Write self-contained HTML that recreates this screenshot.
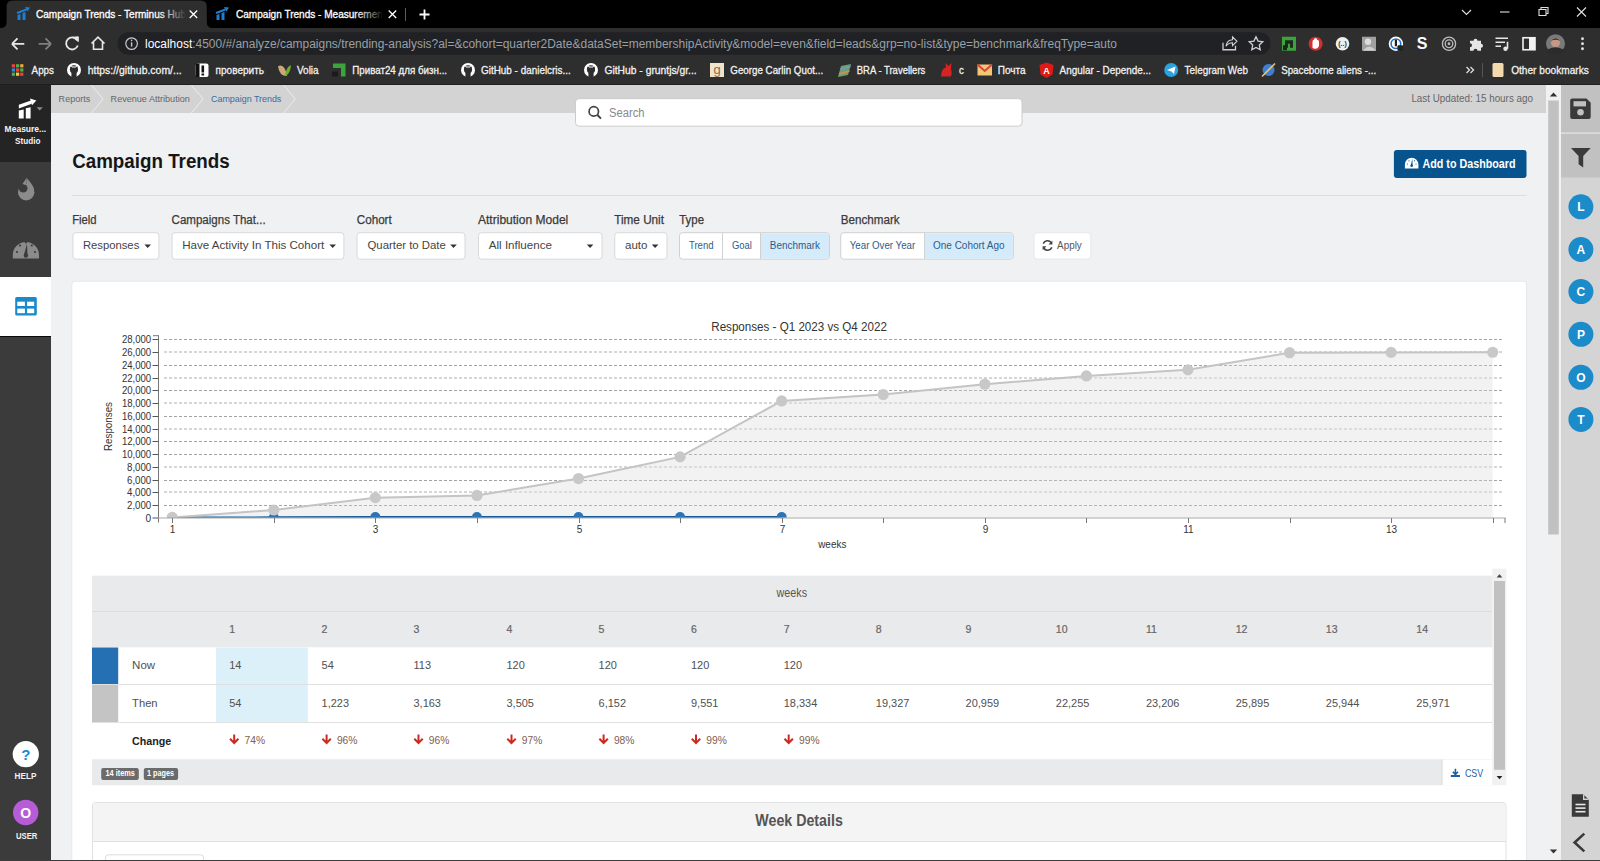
<!DOCTYPE html>
<html><head><meta charset="utf-8"><title>Campaign Trends</title>
<style>
html,body{margin:0;padding:0;width:1600px;height:861px;overflow:hidden;background:#f0f1f3}
svg{display:block}
text{font-family:"Liberation Sans",sans-serif}
</style></head><body>
<svg width="1600" height="861" viewBox="0 0 1600 861" style="position:absolute;left:0;top:0">
<rect x="0" y="0" width="1600" height="28" fill="#000000"/>
<rect x="0" y="28" width="1600" height="57" fill="#2e2e2e"/>
<path d="M0.5 28 Q6.6 28 6.6 22 L6.6 6.5 Q6.6 0.5 12.6 0.5 L200.8 0.5 Q206.8 0.5 206.8 6.5 L206.8 22 Q206.8 28 213 28 Z" fill="#2e2e2e"/>
<path d="M17.5 15 L20.5 14 L20.5 20 L17.5 20Z" fill="#1f7ed0"/>
<path d="M22.5 13 L25.5 12 L25.5 20 L22.5 20Z" fill="#1f7ed0"/>
<path d="M17.0 13 L26.5 9.5" fill="none" stroke="#1f7ed0" stroke-width="2"/>
<path d="M25.0 7 L30.0 7.5 L27.5 11.5Z" fill="#1f7ed0"/>
<path d="M216.5 15 L219.5 14 L219.5 20 L216.5 20Z" fill="#1f7ed0"/>
<path d="M221.5 13 L224.5 12 L224.5 20 L221.5 20Z" fill="#1f7ed0"/>
<path d="M216.0 13 L225.5 9.5" fill="none" stroke="#1f7ed0" stroke-width="2"/>
<path d="M224.0 7 L229.0 7.5 L226.5 11.5Z" fill="#1f7ed0"/>
<defs><linearGradient id="fadeA" gradientUnits="userSpaceOnUse" x1="0" y1="0" x2="150" y2="0"><stop offset="0.8" stop-color="#fff"/><stop offset="1" stop-color="#fff" stop-opacity="0"/></linearGradient><linearGradient id="fadeB" gradientUnits="userSpaceOnUse" x1="0" y1="0" x2="147" y2="0"><stop offset="0.8" stop-color="#fff"/><stop offset="1" stop-color="#fff" stop-opacity="0"/></linearGradient></defs>
<svg x="36" y="0" width="150" height="28" overflow="hidden">
<text x="0" y="17.7" font-size="11" fill="url(#fadeA)" textLength="150" lengthAdjust="spacingAndGlyphs" stroke="url(#fadeA)" stroke-width="0.3">Campaign Trends - Terminus Hub</text>
</svg>
<svg x="236" y="0" width="147" height="28" overflow="hidden">
<text x="0" y="17.7" font-size="11" fill="url(#fadeB)" textLength="180.9" lengthAdjust="spacingAndGlyphs" stroke="url(#fadeB)" stroke-width="0.3">Campaign Trends - Measurement Studio</text>
</svg>
<path d="M189.7 10.5 L197.2 18 M197.2 10.5 L189.7 18" fill="none" stroke="#fff" stroke-width="1.3"/>
<path d="M388.7 10.5 L396.2 18 M396.2 10.5 L388.7 18" fill="none" stroke="#fff" stroke-width="1.3"/>
<path d="M405.5 8 V21" fill="none" stroke="#6b5a48" stroke-width="1"/>
<path d="M424.5 9.5 V19.5 M419.5 14.5 H429.5" fill="none" stroke="#fff" stroke-width="1.8"/>
<path d="M1462 10 L1466.5 14.5 L1471 10" fill="none" stroke="#e0e0e0" stroke-width="1.1"/>
<path d="M1500 12 H1509.5" fill="none" stroke="#e0e0e0" stroke-width="1.1"/>
<path d="M1539 9.5 H1546 V15.5 H1539 Z M1541 9.5 V7.5 H1548 V13.5 H1546" fill="none" stroke="#e0e0e0" stroke-width="1.1"/>
<path d="M1577 7.5 L1586 16.5 M1586 7.5 L1577 16.5" fill="none" stroke="#e0e0e0" stroke-width="1.1"/>
<path d="M12 43.8 H24.3 M12 43.8 L17.5 38.3 M12 43.8 L17.5 49.3" fill="none" stroke="#e8e8e8" stroke-width="1.8"/>
<path d="M38.7 43.8 H51 M51 43.8 L45.5 38.3 M51 43.8 L45.5 49.3" fill="none" stroke="#808080" stroke-width="1.8"/>
<path d="M77.2 40.2 A6 6 0 1 0 77.8 45.5" fill="none" stroke="#e8e8e8" stroke-width="1.8"/>
<path d="M73.5 37.2 L78.3 36.8 L78.3 41.6 Z" fill="#e8e8e8" stroke="#e8e8e8" stroke-width="1"/>
<path d="M91.5 43.5 L98 37.2 L104.5 43.5 M93.5 41.8 V49.2 H102.5 V41.8" fill="none" stroke="#e8e8e8" stroke-width="1.6"/>
<rect x="117.5" y="32.2" width="1153" height="22.5" fill="#202124" rx="11.25"/>
<circle cx="131.6" cy="43.6" r="5.8" fill="none" stroke="#c8c8c8" stroke-width="1.2"/>
<path d="M131.6 42.3 V46.6" fill="none" stroke="#c8c8c8" stroke-width="1.4"/>
<circle cx="131.6" cy="40.4" r="0.8" fill="#c8c8c8"/>
<text x="145" y="47.7" font-size="12" fill="#9aa0a6" textLength="972" lengthAdjust="spacingAndGlyphs"><tspan fill="#ffffff">localhost</tspan>:4500/#/analyze/campaigns/trending-analysis?al=&amp;cohort=quarter2Date&amp;dataSet=membershipActivity&amp;model=even&amp;field=leads&amp;grp=no-list&amp;type=benchmark&amp;freqType=auto</text>
<path d="M1223 42.75 V49.75 H1235.5 V45.75" fill="none" stroke="#d0d0d0" stroke-width="1.3"/>
<path d="M1226 46.25 Q1227 39.75 1232.5 39.75 L1232.5 36.75 L1237 41.25 L1232.5 45.75 L1232.5 42.75 Q1228.5 42.75 1226 46.25Z" fill="none" stroke="#d0d0d0" stroke-width="1.1"/>
<path d="M1256 36.75 L1258.1 41.15 L1262.8 41.75 L1259.3 45.05 L1260.2 49.75 L1256 47.45 L1251.8 49.75 L1252.7 45.05 L1249.2 41.75 L1253.9 41.15Z" fill="none" stroke="#d0d0d0" stroke-width="1.3"/>
<rect x="1282" y="36.75" width="14" height="14" fill="#3ba53b"/>
<path d="M1285 47.75 V40.25 H1293 V47.75 H1290 V43.75 H1288 V47.75Z" fill="#1d2a1d"/>
<rect x="1283" y="45.25" width="4" height="5" fill="#222"/>
<circle cx="1315.6" cy="43.75" r="7" fill="#d42f2f"/>
<path d="M1312.5 47.75 V41.75 Q1312.5 39.75 1314 39.75 L1314 38.75 Q1315.6 37.75 1317 38.75 L1317 39.75 Q1319 39.75 1319 41.75 V45.75 Q1318 48.75 1315.5 48.75 Q1313 48.75 1312.5 47.75Z" fill="#fff"/>
<circle cx="1342.5" cy="43.75" r="6.8" fill="#efefef"/>
<text x="1342.5" y="46.25" font-size="7" fill="#333" font-weight="bold" text-anchor="middle">(..)</text>
<rect x="1362" y="36.75" width="14" height="14" fill="#a0a0a0"/>
<circle cx="1368" cy="41.75" r="3.2" fill="#dcdcdc"/>
<path d="M1363 50.75 Q1369 42.75 1376 50.75Z" fill="#cfcfcf"/>
<circle cx="1395.9" cy="43.75" r="7.2" fill="#fff"/>
<circle cx="1395.9" cy="43.75" r="5.6" fill="#1e6fcc"/>
<circle cx="1395.9" cy="43.75" r="4" fill="#fff"/>
<rect x="1394.8" y="39.75" width="2.2" height="6.5" fill="#222"/>
<rect x="1397.5" y="45.25" width="5.5" height="5.5" fill="#222" rx="1"/>
<text x="1422" y="49.25" font-size="16" fill="#fff" font-weight="bold" text-anchor="middle">S</text>
<circle cx="1449" cy="43.75" r="6.6" fill="none" stroke="#bdbdbd" stroke-width="1.3"/>
<circle cx="1449" cy="43.75" r="3.8" fill="none" stroke="#bdbdbd" stroke-width="1.3"/>
<circle cx="1449" cy="43.75" r="1.4" fill="#bdbdbd"/>
<path d="M1470 40.75 H1473.5 A2 2 0 0 1 1477.5 40.75 H1481 V43.75 A2 2 0 0 1 1481 47.75 V50.75 H1477.5 A2 2 0 0 0 1473.5 50.75 H1470 V47.25 A2 2 0 0 0 1470 43.25Z" fill="#e6e6e6"/>
<path d="M1495.5 38.25 H1508 M1495.5 42.25 H1505 M1495.5 46.25 H1501" fill="none" stroke="#e6e6e6" stroke-width="1.6"/>
<path d="M1507.5 41.75 V48.75" fill="none" stroke="#e6e6e6" stroke-width="1.6"/>
<circle cx="1505.5" cy="48.75" r="2.2" fill="#e6e6e6"/>
<rect x="1523" y="37.75" width="12" height="12" fill="none" stroke="#f2f2f2" stroke-width="1.6"/>
<rect x="1529" y="37.75" width="6" height="12" fill="#f2f2f2"/>
<circle cx="1555.5" cy="43.75" r="9.5" fill="#7a7a7a"/>
<circle cx="1555.5" cy="42.75" r="4.5" fill="#c49a86"/>
<path d="M1547 49.75 Q1555.5 44.75 1564 49.75 A9.5 9.5 0 0 1 1547 49.75Z" fill="#2c2c2c"/>
<path d="M1551 40.75 Q1555.5 35.75 1560 40.75 Q1555.5 38.75 1551 40.75Z" fill="#3b2a20"/>
<circle cx="1582.5" cy="38.75" r="1.4" fill="#e6e6e6"/>
<circle cx="1582.5" cy="43.75" r="1.4" fill="#e6e6e6"/>
<circle cx="1582.5" cy="48.75" r="1.4" fill="#e6e6e6"/>
<text x="31.6" y="73.8" font-size="11.5" fill="#f2f2f2" textLength="22.4" lengthAdjust="spacingAndGlyphs" stroke="#f2f2f2" stroke-width="0.3">Apps</text>
<text x="87.7" y="73.8" font-size="11.5" fill="#f2f2f2" textLength="94" lengthAdjust="spacingAndGlyphs" stroke="#f2f2f2" stroke-width="0.3">https://github.com/...</text>
<text x="215.6" y="73.8" font-size="11.5" fill="#f2f2f2" textLength="48.4" lengthAdjust="spacingAndGlyphs" stroke="#f2f2f2" stroke-width="0.3">проверить</text>
<text x="297" y="73.8" font-size="11.5" fill="#f2f2f2" textLength="21.6" lengthAdjust="spacingAndGlyphs" stroke="#f2f2f2" stroke-width="0.3">Volia</text>
<text x="352.2" y="73.8" font-size="11.5" fill="#f2f2f2" textLength="94.9" lengthAdjust="spacingAndGlyphs" stroke="#f2f2f2" stroke-width="0.3">Приват24 для бизн...</text>
<text x="481" y="73.8" font-size="11.5" fill="#f2f2f2" textLength="89.8" lengthAdjust="spacingAndGlyphs" stroke="#f2f2f2" stroke-width="0.3">GitHub - danielcris...</text>
<text x="604.4" y="73.8" font-size="11.5" fill="#f2f2f2" textLength="92.3" lengthAdjust="spacingAndGlyphs" stroke="#f2f2f2" stroke-width="0.3">GitHub - gruntjs/gr...</text>
<text x="730.3" y="73.8" font-size="11.5" fill="#f2f2f2" textLength="92.9" lengthAdjust="spacingAndGlyphs" stroke="#f2f2f2" stroke-width="0.3">George Carlin Quot...</text>
<text x="856.8" y="73.8" font-size="11.5" fill="#f2f2f2" textLength="68.5" lengthAdjust="spacingAndGlyphs" stroke="#f2f2f2" stroke-width="0.3">BRA - Travellers</text>
<text x="959" y="73.8" font-size="11.5" fill="#f2f2f2" textLength="4.8" lengthAdjust="spacingAndGlyphs" stroke="#f2f2f2" stroke-width="0.3">c</text>
<text x="997.8" y="73.8" font-size="11.5" fill="#f2f2f2" textLength="27.8" lengthAdjust="spacingAndGlyphs" stroke="#f2f2f2" stroke-width="0.3">Почта</text>
<text x="1059.6" y="73.8" font-size="11.5" fill="#f2f2f2" textLength="91.4" lengthAdjust="spacingAndGlyphs" stroke="#f2f2f2" stroke-width="0.3">Angular - Depende...</text>
<text x="1184.6" y="73.8" font-size="11.5" fill="#f2f2f2" textLength="63.3" lengthAdjust="spacingAndGlyphs" stroke="#f2f2f2" stroke-width="0.3">Telegram Web</text>
<text x="1281.2" y="73.8" font-size="11.5" fill="#f2f2f2" textLength="94.9" lengthAdjust="spacingAndGlyphs" stroke="#f2f2f2" stroke-width="0.3">Spaceborne aliens -...</text>
<text x="1511.2" y="73.8" font-size="11.5" fill="#f2f2f2" textLength="77.6" lengthAdjust="spacingAndGlyphs" stroke="#f2f2f2" stroke-width="0.3">Other bookmarks</text>
<rect x="11.8" y="64.2" width="3.2" height="3.2" fill="#e8453c"/>
<rect x="16.0" y="64.2" width="3.2" height="3.2" fill="#4caf50"/>
<rect x="20.200000000000003" y="64.2" width="3.2" height="3.2" fill="#f4a83a"/>
<rect x="11.8" y="68.4" width="3.2" height="3.2" fill="#3d7fe0"/>
<rect x="16.0" y="68.4" width="3.2" height="3.2" fill="#e8453c"/>
<rect x="20.200000000000003" y="68.4" width="3.2" height="3.2" fill="#4caf50"/>
<rect x="11.8" y="72.60000000000001" width="3.2" height="3.2" fill="#4caf50"/>
<rect x="16.0" y="72.60000000000001" width="3.2" height="3.2" fill="#f4c83a"/>
<rect x="20.200000000000003" y="72.60000000000001" width="3.2" height="3.2" fill="#e8453c"/>
<circle cx="74" cy="70" r="7" fill="#fff"/>
<circle cx="74" cy="69.4" r="4.1" fill="#2e2e2e"/>
<path d="M71.4 72.5 V77 H76.6 V72.5Z" fill="#2e2e2e"/>
<path d="M70.5 64.5 L72 67 L76 67 L77.5 64.5" fill="none" stroke="#fff" stroke-width="1"/>
<circle cx="468" cy="70" r="7" fill="#fff"/>
<circle cx="468" cy="69.4" r="4.1" fill="#2e2e2e"/>
<path d="M465.4 72.5 V77 H470.6 V72.5Z" fill="#2e2e2e"/>
<path d="M464.5 64.5 L466 67 L470 67 L471.5 64.5" fill="none" stroke="#fff" stroke-width="1"/>
<circle cx="591" cy="70" r="7" fill="#fff"/>
<circle cx="591" cy="69.4" r="4.1" fill="#2e2e2e"/>
<path d="M588.4 72.5 V77 H593.6 V72.5Z" fill="#2e2e2e"/>
<path d="M587.5 64.5 L589 67 L593 67 L594.5 64.5" fill="none" stroke="#fff" stroke-width="1"/>
<rect x="195.5" y="63.5" width="13" height="13.5" fill="#fff" rx="2"/>
<rect x="195.5" y="63.5" width="4" height="13.5" fill="#111"/>
<rect x="201.5" y="65.5" width="2.6" height="7" fill="#111"/>
<rect x="201.5" y="73.5" width="2.6" height="2" fill="#111"/>
<path d="M278 66 Q285 63 287 76 Q279 76 278 66Z" fill="#c9a87a"/>
<path d="M291 65 Q290.5 73 285.5 76.5 Q285 68 291 65Z" fill="#6cb12c"/>
<path d="M333 63.5 H345.5 V76.5 H341 V68 H333Z" fill="#3aa53a"/>
<rect x="332" y="71.5" width="6" height="5" fill="#1a1a1a"/>
<rect x="710" y="63" width="14" height="14" fill="#f2e4ca"/>
<text x="717" y="73.5" font-size="13" fill="#8c6a48" text-anchor="middle" font-family="Liberation Serif">g</text>
<path d="M838 77 L841 66 L851 64 L848 75Z" fill="#6f9f6f"/>
<path d="M839 74 L849.5 71" fill="none" stroke="#e08a50" stroke-width="1.6"/>
<path d="M840.5 69 L850.5 66.5" fill="none" stroke="#6a9ad0" stroke-width="1.6"/>
<path d="M941 76.5 Q941.5 68 946 67.5 L945.5 63 L948.5 66 L951.5 63 L951 69 Q952.5 75 950.5 76.5Z" fill="#d42424"/>
<rect x="977.5" y="64.5" width="14.5" height="11" fill="#f2c674"/>
<path d="M977.5 64.5 L984.75 71 L992 64.5" fill="none" stroke="#d9443a" stroke-width="2"/>
<path d="M1046.5 62.5 L1053.5 65 L1052.5 74.5 L1046.5 78 L1040.5 74.5 L1039.5 65Z" fill="#dd1b16"/>
<text x="1046.5" y="74" font-size="9" fill="#fff" font-weight="bold" text-anchor="middle">A</text>
<circle cx="1171.2" cy="70" r="7" fill="#2ba2de"/>
<path d="M1167 70 L1175.5 66.5 L1174 74 L1171.5 71.5Z" fill="#fff"/>
<circle cx="1268.5" cy="70" r="6" fill="#3f7fd3"/>
<path d="M1262 76.5 L1275 63.5" fill="none" stroke="#e8c36b" stroke-width="1.6"/>
<path d="M1466.5 67 L1469.5 70 L1466.5 73 M1470.5 67 L1473.5 70 L1470.5 73" fill="none" stroke="#e0e0e0" stroke-width="1.3"/>
<path d="M1482.5 63 V77" fill="none" stroke="#555" stroke-width="1"/>
<rect x="1492.5" y="63" width="11" height="14" fill="#f3d9ad" rx="1.5"/>
<rect x="0" y="84" width="1600" height="1" fill="#1e1f22"/>
<rect x="51" y="85" width="1495" height="776" fill="#f0f1f3"/>
<rect x="0" y="85" width="51" height="776" fill="#3b3b3b"/>
<rect x="0" y="85" width="51" height="77" fill="#242424"/>
<path d="M18.8 110.5 L23.7 109.5 L23.7 118.6 L18.8 118.6Z" fill="#fff"/>
<path d="M25.8 108.3 L30.6 107.3 L30.6 118.6 L25.8 118.6Z" fill="#fff"/>
<path d="M18.8 104.8 L31 100.6 L31.8 103.8 L18.8 108.6Z" fill="#fff"/>
<path d="M30 98.6 L36.3 100.5 L32 105.2Z" fill="#fff"/>
<path d="M36.6 107.2 L42.8 107.2 L39.7 110.6Z" fill="#8d8d8d"/>
<text x="4.6" y="132.2" font-size="9.6" fill="#f4f4f4" font-weight="bold" textLength="41.6" lengthAdjust="spacingAndGlyphs">Measure...</text>
<text x="15.1" y="143.6" font-size="9.6" fill="#f4f4f4" font-weight="bold" textLength="25.3" lengthAdjust="spacingAndGlyphs">Studio</text>
<circle cx="26.2" cy="192.3" r="8.2" fill="#8b8b8b"/>
<path d="M26.5 177.8 C29 181 33.5 185 34.2 190 L26 192 Z" fill="#8b8b8b"/>
<circle cx="23.2" cy="188.2" r="4.3" fill="#3b3b3b"/>
<path d="M26.5 177.8 C25 180.5 23.5 182.5 22.5 184 L26 185Z" fill="#8b8b8b"/>
<path d="M12.8 258.4 L12.8 255 A13.1 13.1 0 0 1 39 255 L39 258.4Z" fill="#8b8b8b"/>
<path d="M27 244 L24 254.5 L27.5 255.2Z" fill="#3b3b3b"/>
<circle cx="25.9" cy="255.5" r="2.2" fill="#3b3b3b"/>
<circle cx="17" cy="252" r="1.1" fill="#3b3b3b"/>
<circle cx="20" cy="245.5" r="1.1" fill="#3b3b3b"/>
<circle cx="31.8" cy="245.5" r="1.1" fill="#3b3b3b"/>
<circle cx="35" cy="252" r="1.1" fill="#3b3b3b"/>
<circle cx="25.9" cy="242.5" r="1.1" fill="#3b3b3b"/>
<rect x="0" y="277" width="51" height="59" fill="#ffffff"/>
<rect x="0" y="336" width="51" height="1" fill="#0a0a0a"/>
<rect x="15.2" y="296.9" width="21.6" height="18.7" fill="#1b8acb" rx="1.5"/>
<rect x="17.25" y="301.7" width="7.65" height="4.3" fill="#fff"/>
<rect x="27.1" y="301.7" width="7.1" height="4.3" fill="#fff"/>
<rect x="17.25" y="308.6" width="7.65" height="4.6" fill="#fff"/>
<rect x="27.1" y="308.6" width="7.1" height="4.6" fill="#fff"/>
<circle cx="25.8" cy="754.2" r="13.1" fill="#ffffff"/>
<text x="25.8" y="760" font-size="15" fill="#1a8ad2" font-weight="bold" text-anchor="middle">?</text>
<text x="25.5" y="779.4" font-size="8.6" fill="#f2f2f2" font-weight="bold" text-anchor="middle" textLength="21.8" lengthAdjust="spacingAndGlyphs">HELP</text>
<circle cx="25.7" cy="812.5" r="12.7" fill="#b65cd6"/>
<text x="25.7" y="817.5" font-size="14" fill="#ffffff" font-weight="bold" text-anchor="middle">O</text>
<text x="26.7" y="838.7" font-size="8.6" fill="#f2f2f2" font-weight="bold" text-anchor="middle" textLength="21.4" lengthAdjust="spacingAndGlyphs">USER</text>
<rect x="51" y="85" width="1495" height="28" fill="#d3d3d3"/>
<text x="58.6" y="101.6" font-size="9.6" fill="#666" textLength="31.7" lengthAdjust="spacingAndGlyphs">Reports</text>
<text x="110.6" y="101.6" font-size="9.6" fill="#666" textLength="79.2" lengthAdjust="spacingAndGlyphs">Revenue Attribution</text>
<text x="211" y="101.6" font-size="9.6" fill="#2f6ea8" textLength="70.3" lengthAdjust="spacingAndGlyphs">Campaign Trends</text>
<path d="M91.4 85 L103.10000000000001 99 L91.4 113" fill="none" stroke="#eeeeee" stroke-width="1"/>
<path d="M191.4 85 L203.1 99 L191.4 113" fill="none" stroke="#eeeeee" stroke-width="1"/>
<path d="M283.6 85 L295.3 99 L283.6 113" fill="none" stroke="#eeeeee" stroke-width="1"/>
<text x="1411.4" y="102.25" font-size="10" fill="#666" textLength="121.6" lengthAdjust="spacingAndGlyphs">Last Updated: 15 hours ago</text>
<rect x="575.5" y="98.7" width="446.5" height="27.5" fill="#ffffff" rx="3.5" stroke="#cccccc" stroke-width="1"/>
<circle cx="593.8" cy="111.4" r="4.7" fill="none" stroke="#444" stroke-width="1.7"/>
<path d="M597.2 114.8 L601 118.6" fill="none" stroke="#444" stroke-width="2"/>
<text x="609.1" y="116.6" font-size="12" fill="#888" textLength="35.4" lengthAdjust="spacingAndGlyphs">Search</text>
<text x="72.2" y="167.75" font-size="20" fill="#161616" font-weight="bold" textLength="157.5" lengthAdjust="spacingAndGlyphs">Campaign Trends</text>
<rect x="1393.9" y="150" width="132.6" height="28" fill="#07538e" rx="3"/>
<path d="M1404.9 168.6 L1404.9 164.5 A6.75 6.75 0 0 1 1418.4 164.5 L1418.4 168.6Z" fill="#fff"/>
<path d="M1412.3 158.8 L1410.8 165.5 L1412.7 165.8Z" fill="#07538e"/>
<circle cx="1411.6" cy="165.8" r="1.3" fill="#07538e"/>
<circle cx="1407.5" cy="164" r="0.6" fill="#07538e"/>
<circle cx="1409" cy="160.8" r="0.6" fill="#07538e"/>
<circle cx="1414.5" cy="160.8" r="0.6" fill="#07538e"/>
<circle cx="1416" cy="164" r="0.6" fill="#07538e"/>
<text x="1422.5" y="167.8" font-size="13" fill="#ffffff" font-weight="bold" textLength="93" lengthAdjust="spacingAndGlyphs">Add to Dashboard</text>
<rect x="72" y="195" width="1454.5" height="1" fill="#dcdddf"/>
<text x="72.2" y="224" font-size="12" fill="#3a3a3a" textLength="24.4" lengthAdjust="spacingAndGlyphs" stroke="#3a3a3a" stroke-width="0.25">Field</text>
<text x="171.6" y="224" font-size="12" fill="#3a3a3a" textLength="94" lengthAdjust="spacingAndGlyphs" stroke="#3a3a3a" stroke-width="0.25">Campaigns That...</text>
<text x="356.75" y="224" font-size="12" fill="#3a3a3a" textLength="35" lengthAdjust="spacingAndGlyphs" stroke="#3a3a3a" stroke-width="0.25">Cohort</text>
<text x="478" y="224" font-size="12" fill="#3a3a3a" textLength="90.25" lengthAdjust="spacingAndGlyphs" stroke="#3a3a3a" stroke-width="0.25">Attribution Model</text>
<text x="614.25" y="224" font-size="12" fill="#3a3a3a" textLength="49.75" lengthAdjust="spacingAndGlyphs" stroke="#3a3a3a" stroke-width="0.25">Time Unit</text>
<text x="679.25" y="224" font-size="12" fill="#3a3a3a" textLength="24.75" lengthAdjust="spacingAndGlyphs" stroke="#3a3a3a" stroke-width="0.25">Type</text>
<text x="840.7" y="224" font-size="12" fill="#3a3a3a" textLength="59" lengthAdjust="spacingAndGlyphs" stroke="#3a3a3a" stroke-width="0.25">Benchmark</text>
<rect x="72.9" y="232.7" width="86.0" height="26.5" fill="#ffffff" rx="3" stroke="#d9d9d9" stroke-width="1"/>
<text x="82.9" y="249" font-size="11.6" fill="#444" textLength="56.4" lengthAdjust="spacingAndGlyphs">Responses</text>
<path d="M144.4 244.6 L151.0 244.6 L147.70000000000002 248Z" fill="#333"/>
<rect x="172.1" y="232.7" width="171.79999999999998" height="26.5" fill="#ffffff" rx="3" stroke="#d9d9d9" stroke-width="1"/>
<text x="182.25" y="249" font-size="11.6" fill="#444" textLength="142" lengthAdjust="spacingAndGlyphs">Have Activity In This Cohort</text>
<path d="M329.4 244.6 L336.0 244.6 L332.7 248Z" fill="#333"/>
<rect x="357.0" y="232.7" width="108.0" height="26.5" fill="#ffffff" rx="3" stroke="#d9d9d9" stroke-width="1"/>
<text x="367.5" y="249" font-size="11.6" fill="#444" textLength="78.25" lengthAdjust="spacingAndGlyphs">Quarter to Date</text>
<path d="M450.2 244.6 L456.8 244.6 L453.5 248Z" fill="#333"/>
<rect x="478.5" y="232.7" width="123.5" height="26.5" fill="#ffffff" rx="3" stroke="#d9d9d9" stroke-width="1"/>
<text x="488.75" y="249" font-size="11.6" fill="#444" textLength="63.25" lengthAdjust="spacingAndGlyphs">All Influence</text>
<path d="M586.8 244.6 L593.4 244.6 L590.0999999999999 248Z" fill="#333"/>
<rect x="614.75" y="232.7" width="52.25" height="26.5" fill="#ffffff" rx="3" stroke="#d9d9d9" stroke-width="1"/>
<text x="625" y="249" font-size="11.6" fill="#444" textLength="22.5" lengthAdjust="spacingAndGlyphs">auto</text>
<path d="M651.8 244.6 L658.4 244.6 L655.0999999999999 248Z" fill="#333"/>
<rect x="679.5" y="232.7" width="150" height="26.5" fill="#ffffff" rx="3" stroke="#d0d0d0" stroke-width="1"/>
<path d="M760.5 233.2 H826.5 A2.5 2.5 0 0 1 829 235.7 V256.7 A2.5 2.5 0 0 1 826.5 258.7 H760.5Z" fill="#d6ebf9"/>
<path d="M722.5 233 V259 M760.5 233 V259" fill="none" stroke="#d0d0d0" stroke-width="1"/>
<text x="689" y="249" font-size="10" fill="#2b5d8c" textLength="24.5" lengthAdjust="spacingAndGlyphs">Trend</text>
<text x="732" y="249" font-size="10" fill="#2b5d8c" textLength="19.8" lengthAdjust="spacingAndGlyphs">Goal</text>
<text x="769.8" y="249" font-size="10" fill="#2b5d8c" textLength="50.2" lengthAdjust="spacingAndGlyphs">Benchmark</text>
<rect x="840.7" y="232.7" width="172.7" height="26.5" fill="#ffffff" rx="3" stroke="#d0d0d0" stroke-width="1"/>
<path d="M924.6 233.2 H1010.4 A2.5 2.5 0 0 1 1012.9 235.7 V256.7 A2.5 2.5 0 0 1 1010.4 258.7 H924.6Z" fill="#d6ebf9"/>
<path d="M924.6 233 V259" fill="none" stroke="#d0d0d0" stroke-width="1"/>
<text x="849.8" y="249" font-size="10" fill="#2b5d8c" textLength="65.4" lengthAdjust="spacingAndGlyphs">Year Over Year</text>
<text x="933" y="249" font-size="10" fill="#2b5d8c" textLength="71.6" lengthAdjust="spacingAndGlyphs">One Cohort Ago</text>
<rect x="1034" y="232.8" width="56.8" height="26.2" fill="#ffffff" rx="3" stroke="#e8e8e8" stroke-width="1"/>
<path d="M1051.3 242.8 A4.6 4.6 0 0 0 1043.2 243.6 M1043.6 248 A4.6 4.6 0 0 0 1051.8 247.2" fill="none" stroke="#444" stroke-width="1.5"/>
<path d="M1052.4 240.6 L1052.4 244.5 L1048.6 244.5Z" fill="#444"/>
<path d="M1042.6 250.2 L1042.6 246.3 L1046.4 246.3Z" fill="#444"/>
<text x="1057.1" y="249" font-size="10" fill="#555" textLength="24.7" lengthAdjust="spacingAndGlyphs">Apply</text>
<rect x="71.8" y="281.2" width="1454.7" height="620" fill="#ffffff" rx="3" stroke="#e6e7e8" stroke-width="1"/>
<text x="711.25" y="330.9" font-size="12" fill="#333" textLength="175.6" lengthAdjust="spacingAndGlyphs">Responses - Q1 2023 vs Q4 2022</text>
<path d="M164 505.5 H1504" fill="none" stroke="#a3a3a3" stroke-width="1" stroke-dasharray="3,2" opacity="1"/>
<path d="M164 492 H1504" fill="none" stroke="#d6d6d6" stroke-width="2" stroke-dasharray="3,2" opacity="1"/>
<path d="M164 480.5 H1504" fill="none" stroke="#a3a3a3" stroke-width="1" stroke-dasharray="3,2" opacity="1"/>
<path d="M164 467 H1504" fill="none" stroke="#d6d6d6" stroke-width="2" stroke-dasharray="3,2" opacity="1"/>
<path d="M164 454.5 H1504" fill="none" stroke="#a3a3a3" stroke-width="1" stroke-dasharray="3,2" opacity="1"/>
<path d="M164 441.5 H1504" fill="none" stroke="#a3a3a3" stroke-width="1" stroke-dasharray="3,2" opacity="1"/>
<path d="M164 429 H1504" fill="none" stroke="#d6d6d6" stroke-width="2" stroke-dasharray="3,2" opacity="1"/>
<path d="M164 416.5 H1504" fill="none" stroke="#a3a3a3" stroke-width="1" stroke-dasharray="3,2" opacity="1"/>
<path d="M164 403 H1504" fill="none" stroke="#d6d6d6" stroke-width="2" stroke-dasharray="3,2" opacity="1"/>
<path d="M164 390.5 H1504" fill="none" stroke="#a3a3a3" stroke-width="1" stroke-dasharray="3,2" opacity="1"/>
<path d="M164 378 H1504" fill="none" stroke="#d6d6d6" stroke-width="2" stroke-dasharray="3,2" opacity="1"/>
<path d="M164 365.5 H1504" fill="none" stroke="#a3a3a3" stroke-width="1" stroke-dasharray="3,2" opacity="1"/>
<path d="M164 352 H1504" fill="none" stroke="#d6d6d6" stroke-width="2" stroke-dasharray="3,2" opacity="1"/>
<path d="M164 339.5 H1504" fill="none" stroke="#a3a3a3" stroke-width="1" stroke-dasharray="3,2" opacity="1"/>
<defs><clipPath id="plotclip"><rect x="158" y="300" width="1350" height="217.8"/></clipPath></defs>
<g clip-path="url(#plotclip)">
<polygon points="172.20,517.8 172.20,517.46 273.78,510.00 375.35,497.64 476.93,495.46 578.51,478.58 680.09,456.91 781.66,400.92 883.24,394.59 984.82,384.19 1086.39,375.92 1187.97,369.86 1289.55,352.72 1391.12,352.41 1492.70,352.23 1492.70,517.8" fill="#f2f2f2"/>
<path d="M164 505.5 H1504" fill="none" stroke="#a3a3a3" stroke-width="1" stroke-dasharray="3,2" opacity="0.8"/>
<path d="M164 492 H1504" fill="none" stroke="#d6d6d6" stroke-width="2" stroke-dasharray="3,2" opacity="0.8"/>
<path d="M164 480.5 H1504" fill="none" stroke="#a3a3a3" stroke-width="1" stroke-dasharray="3,2" opacity="0.8"/>
<path d="M164 467 H1504" fill="none" stroke="#d6d6d6" stroke-width="2" stroke-dasharray="3,2" opacity="0.8"/>
<path d="M164 454.5 H1504" fill="none" stroke="#a3a3a3" stroke-width="1" stroke-dasharray="3,2" opacity="0.8"/>
<path d="M164 441.5 H1504" fill="none" stroke="#a3a3a3" stroke-width="1" stroke-dasharray="3,2" opacity="0.8"/>
<path d="M164 429 H1504" fill="none" stroke="#d6d6d6" stroke-width="2" stroke-dasharray="3,2" opacity="0.8"/>
<path d="M164 416.5 H1504" fill="none" stroke="#a3a3a3" stroke-width="1" stroke-dasharray="3,2" opacity="0.8"/>
<path d="M164 403 H1504" fill="none" stroke="#d6d6d6" stroke-width="2" stroke-dasharray="3,2" opacity="0.8"/>
<path d="M164 390.5 H1504" fill="none" stroke="#a3a3a3" stroke-width="1" stroke-dasharray="3,2" opacity="0.8"/>
<path d="M164 378 H1504" fill="none" stroke="#d6d6d6" stroke-width="2" stroke-dasharray="3,2" opacity="0.8"/>
<path d="M164 365.5 H1504" fill="none" stroke="#a3a3a3" stroke-width="1" stroke-dasharray="3,2" opacity="0.8"/>
<path d="M164 352 H1504" fill="none" stroke="#d6d6d6" stroke-width="2" stroke-dasharray="3,2" opacity="0.8"/>
<path d="M164 339.5 H1504" fill="none" stroke="#a3a3a3" stroke-width="1" stroke-dasharray="3,2" opacity="0.8"/>
<polyline points="172.20,517.71 273.78,517.46 375.35,517.08 476.93,517.03 578.51,517.03 680.09,517.03 781.66,517.03" fill="none" stroke="#0f5a9c" stroke-width="2.2"/>
<circle cx="172.2" cy="517.71" r="5" fill="#2a74b8"/>
<circle cx="273.78" cy="517.46" r="5" fill="#2a74b8"/>
<circle cx="375.35" cy="517.08" r="5" fill="#2a74b8"/>
<circle cx="476.93" cy="517.03" r="5" fill="#2a74b8"/>
<circle cx="578.51" cy="517.03" r="5" fill="#2a74b8"/>
<circle cx="680.09" cy="517.03" r="5" fill="#2a74b8"/>
<circle cx="781.66" cy="517.03" r="5" fill="#2a74b8"/>
<polyline points="172.20,517.46 273.78,510.00 375.35,497.64 476.93,495.46 578.51,478.58 680.09,456.91 781.66,400.92 883.24,394.59 984.82,384.19 1086.39,375.92 1187.97,369.86 1289.55,352.72 1391.12,352.41 1492.70,352.23" fill="none" stroke="#c4c4c4" stroke-width="2"/>
<circle cx="172.2" cy="517.46" r="5.6" fill="#c8c8c8"/>
<circle cx="273.78" cy="510.0" r="5.6" fill="#c8c8c8"/>
<circle cx="375.35" cy="497.64" r="5.6" fill="#c8c8c8"/>
<circle cx="476.93" cy="495.46" r="5.6" fill="#c8c8c8"/>
<circle cx="578.51" cy="478.58" r="5.6" fill="#c8c8c8"/>
<circle cx="680.09" cy="456.91" r="5.6" fill="#c8c8c8"/>
<circle cx="781.66" cy="400.92" r="5.6" fill="#c8c8c8"/>
<circle cx="883.24" cy="394.59" r="5.6" fill="#c8c8c8"/>
<circle cx="984.82" cy="384.19" r="5.6" fill="#c8c8c8"/>
<circle cx="1086.39" cy="375.92" r="5.6" fill="#c8c8c8"/>
<circle cx="1187.97" cy="369.86" r="5.6" fill="#c8c8c8"/>
<circle cx="1289.55" cy="352.72" r="5.6" fill="#c8c8c8"/>
<circle cx="1391.12" cy="352.41" r="5.6" fill="#c8c8c8"/>
<circle cx="1492.7" cy="352.23" r="5.6" fill="#c8c8c8"/>
</g>
<path d="M158.5 335.2 V522.5" fill="none" stroke="#777" stroke-width="1"/>
<path d="M153 335.7 H158.5" fill="none" stroke="#777" stroke-width="1"/>
<path d="M152.5 518 H158.5" fill="none" stroke="#555" stroke-width="1"/>
<text x="151.2" y="521.6" font-size="10" fill="#333" text-anchor="end" textLength="5.6" lengthAdjust="spacingAndGlyphs">0</text>
<path d="M152.5 505.5 H158.5" fill="none" stroke="#555" stroke-width="1"/>
<text x="151.2" y="509.1" font-size="10" fill="#333" text-anchor="end" textLength="24.2" lengthAdjust="spacingAndGlyphs">2,000</text>
<path d="M152.5 492.5 H158.5" fill="none" stroke="#555" stroke-width="1"/>
<text x="151.2" y="496.1" font-size="10" fill="#333" text-anchor="end" textLength="24.2" lengthAdjust="spacingAndGlyphs">4,000</text>
<path d="M152.5 480.5 H158.5" fill="none" stroke="#555" stroke-width="1"/>
<text x="151.2" y="484.1" font-size="10" fill="#333" text-anchor="end" textLength="24.2" lengthAdjust="spacingAndGlyphs">6,000</text>
<path d="M152.5 467.5 H158.5" fill="none" stroke="#555" stroke-width="1"/>
<text x="151.2" y="471.1" font-size="10" fill="#333" text-anchor="end" textLength="24.2" lengthAdjust="spacingAndGlyphs">8,000</text>
<path d="M152.5 454.5 H158.5" fill="none" stroke="#555" stroke-width="1"/>
<text x="151.2" y="458.1" font-size="10" fill="#333" text-anchor="end" textLength="29.3" lengthAdjust="spacingAndGlyphs">10,000</text>
<path d="M152.5 441.5 H158.5" fill="none" stroke="#555" stroke-width="1"/>
<text x="151.2" y="445.1" font-size="10" fill="#333" text-anchor="end" textLength="29.3" lengthAdjust="spacingAndGlyphs">12,000</text>
<path d="M152.5 429.5 H158.5" fill="none" stroke="#555" stroke-width="1"/>
<text x="151.2" y="433.1" font-size="10" fill="#333" text-anchor="end" textLength="29.3" lengthAdjust="spacingAndGlyphs">14,000</text>
<path d="M152.5 416.5 H158.5" fill="none" stroke="#555" stroke-width="1"/>
<text x="151.2" y="420.1" font-size="10" fill="#333" text-anchor="end" textLength="29.3" lengthAdjust="spacingAndGlyphs">16,000</text>
<path d="M152.5 403.5 H158.5" fill="none" stroke="#555" stroke-width="1"/>
<text x="151.2" y="407.1" font-size="10" fill="#333" text-anchor="end" textLength="29.3" lengthAdjust="spacingAndGlyphs">18,000</text>
<path d="M152.5 390.5 H158.5" fill="none" stroke="#555" stroke-width="1"/>
<text x="151.2" y="394.1" font-size="10" fill="#333" text-anchor="end" textLength="29.3" lengthAdjust="spacingAndGlyphs">20,000</text>
<path d="M152.5 378.5 H158.5" fill="none" stroke="#555" stroke-width="1"/>
<text x="151.2" y="382.1" font-size="10" fill="#333" text-anchor="end" textLength="29.3" lengthAdjust="spacingAndGlyphs">22,000</text>
<path d="M152.5 365.5 H158.5" fill="none" stroke="#555" stroke-width="1"/>
<text x="151.2" y="369.1" font-size="10" fill="#333" text-anchor="end" textLength="29.3" lengthAdjust="spacingAndGlyphs">24,000</text>
<path d="M152.5 352.5 H158.5" fill="none" stroke="#555" stroke-width="1"/>
<text x="151.2" y="356.1" font-size="10" fill="#333" text-anchor="end" textLength="29.3" lengthAdjust="spacingAndGlyphs">26,000</text>
<path d="M152.5 339.5 H158.5" fill="none" stroke="#555" stroke-width="1"/>
<text x="151.2" y="343.1" font-size="10" fill="#333" text-anchor="end" textLength="29.3" lengthAdjust="spacingAndGlyphs">28,000</text>
<path d="M158 518 H1505.5" fill="none" stroke="#aaa" stroke-width="1.2"/>
<path d="M172.5 518 V523" fill="none" stroke="#777" stroke-width="1"/>
<text x="172.5" y="532.6" font-size="10" fill="#333" text-anchor="middle">1</text>
<path d="M274.5 518 V523" fill="none" stroke="#777" stroke-width="1"/>
<path d="M375.5 518 V523" fill="none" stroke="#777" stroke-width="1"/>
<text x="375.5" y="532.6" font-size="10" fill="#333" text-anchor="middle">3</text>
<path d="M477.5 518 V523" fill="none" stroke="#777" stroke-width="1"/>
<path d="M579.5 518 V523" fill="none" stroke="#777" stroke-width="1"/>
<text x="579.5" y="532.6" font-size="10" fill="#333" text-anchor="middle">5</text>
<path d="M680.5 518 V523" fill="none" stroke="#777" stroke-width="1"/>
<path d="M782.5 518 V523" fill="none" stroke="#777" stroke-width="1"/>
<text x="782.5" y="532.6" font-size="10" fill="#333" text-anchor="middle">7</text>
<path d="M883.5 518 V523" fill="none" stroke="#777" stroke-width="1"/>
<path d="M985.5 518 V523" fill="none" stroke="#777" stroke-width="1"/>
<text x="985.5" y="532.6" font-size="10" fill="#333" text-anchor="middle">9</text>
<path d="M1086.5 518 V523" fill="none" stroke="#777" stroke-width="1"/>
<path d="M1188.5 518 V523" fill="none" stroke="#777" stroke-width="1"/>
<text x="1188.5" y="532.6" font-size="10" fill="#333" text-anchor="middle">11</text>
<path d="M1290.5 518 V523" fill="none" stroke="#777" stroke-width="1"/>
<path d="M1391.5 518 V523" fill="none" stroke="#777" stroke-width="1"/>
<text x="1391.5" y="532.6" font-size="10" fill="#333" text-anchor="middle">13</text>
<path d="M1493.5 518 V523" fill="none" stroke="#777" stroke-width="1"/>
<path d="M1505 518 V523" fill="none" stroke="#777" stroke-width="1"/>
<text x="832.3" y="547.5" font-size="10" fill="#333" text-anchor="middle" textLength="28.2" lengthAdjust="spacingAndGlyphs">weeks</text>
<text transform="translate(112.3 426.5) rotate(-90)" font-size="10" fill="#333" text-anchor="middle" textLength="49" lengthAdjust="spacingAndGlyphs">Responses</text>
<rect x="92" y="575.7" width="1400.3" height="36" fill="#e9eaeb"/>
<rect x="92" y="611.2" width="1400.3" height="0.8" fill="#d8d9da"/>
<rect x="92" y="612" width="1400.3" height="35.5" fill="#e9eaeb"/>
<text x="791.8" y="596.9" font-size="12" fill="#555" text-anchor="middle" textLength="30.4" lengthAdjust="spacingAndGlyphs">weeks</text>
<text x="229.2" y="632.6" font-size="10.5" fill="#666" stroke="#666" stroke-width="0.2">1</text>
<text x="321.6" y="632.6" font-size="10.5" fill="#666" stroke="#666" stroke-width="0.2">2</text>
<text x="413.5" y="632.6" font-size="10.5" fill="#666" stroke="#666" stroke-width="0.2">3</text>
<text x="506.5" y="632.6" font-size="10.5" fill="#666" stroke="#666" stroke-width="0.2">4</text>
<text x="598.6" y="632.6" font-size="10.5" fill="#666" stroke="#666" stroke-width="0.2">5</text>
<text x="691" y="632.6" font-size="10.5" fill="#666" stroke="#666" stroke-width="0.2">6</text>
<text x="783.7" y="632.6" font-size="10.5" fill="#666" stroke="#666" stroke-width="0.2">7</text>
<text x="875.8" y="632.6" font-size="10.5" fill="#666" stroke="#666" stroke-width="0.2">8</text>
<text x="965.6" y="632.6" font-size="10.5" fill="#666" stroke="#666" stroke-width="0.2">9</text>
<text x="1055.8" y="632.6" font-size="10.5" fill="#666" stroke="#666" stroke-width="0.2">10</text>
<text x="1145.9" y="632.6" font-size="10.5" fill="#666" stroke="#666" stroke-width="0.2">11</text>
<text x="1235.7" y="632.6" font-size="10.5" fill="#666" stroke="#666" stroke-width="0.2">12</text>
<text x="1325.8" y="632.6" font-size="10.5" fill="#666" stroke="#666" stroke-width="0.2">13</text>
<text x="1416.3" y="632.6" font-size="10.5" fill="#666" stroke="#666" stroke-width="0.2">14</text>
<rect x="92" y="647.5" width="1400.3" height="111.5" fill="#ffffff"/>
<rect x="216" y="647.5" width="91.8" height="74.8" fill="#dcf0fa"/>
<rect x="92" y="647.5" width="26.2" height="36.8" fill="#2470b3"/>
<rect x="92" y="684.3" width="26.2" height="38" fill="#c4c4c4"/>
<rect x="92" y="684" width="1400.3" height="1" fill="#e0e0e0"/>
<rect x="118.2" y="722" width="1374.1" height="1" fill="#e0e0e0"/>
<rect x="92" y="722" width="26.2" height="1" fill="#e0e0e0"/>
<text x="132.1" y="669.3" font-size="11.8" fill="#505050" textLength="23" lengthAdjust="spacingAndGlyphs">Now</text>
<text x="132.1" y="707" font-size="11.8" fill="#505050" textLength="25.5" lengthAdjust="spacingAndGlyphs">Then</text>
<text x="132.1" y="744.6" font-size="11.8" fill="#222" font-weight="bold" textLength="39.2" lengthAdjust="spacingAndGlyphs">Change</text>
<text x="229.2" y="669.3" font-size="11.8" fill="#505050" textLength="12.21" lengthAdjust="spacingAndGlyphs">14</text>
<text x="321.6" y="669.3" font-size="11.8" fill="#505050" textLength="12.21" lengthAdjust="spacingAndGlyphs">54</text>
<text x="413.5" y="669.3" font-size="11.8" fill="#505050" textLength="17.5" lengthAdjust="spacingAndGlyphs">113</text>
<text x="506.5" y="669.3" font-size="11.8" fill="#505050" textLength="18.31" lengthAdjust="spacingAndGlyphs">120</text>
<text x="598.6" y="669.3" font-size="11.8" fill="#505050" textLength="18.31" lengthAdjust="spacingAndGlyphs">120</text>
<text x="691" y="669.3" font-size="11.8" fill="#505050" textLength="18.31" lengthAdjust="spacingAndGlyphs">120</text>
<text x="783.7" y="669.3" font-size="11.8" fill="#505050" textLength="18.31" lengthAdjust="spacingAndGlyphs">120</text>
<text x="229.2" y="707" font-size="11.8" fill="#505050" textLength="12.21" lengthAdjust="spacingAndGlyphs">54</text>
<text x="321.6" y="707" font-size="11.8" fill="#505050" textLength="27.46" lengthAdjust="spacingAndGlyphs">1,223</text>
<text x="413.5" y="707" font-size="11.8" fill="#505050" textLength="27.46" lengthAdjust="spacingAndGlyphs">3,163</text>
<text x="506.5" y="707" font-size="11.8" fill="#505050" textLength="27.46" lengthAdjust="spacingAndGlyphs">3,505</text>
<text x="598.6" y="707" font-size="11.8" fill="#505050" textLength="27.46" lengthAdjust="spacingAndGlyphs">6,152</text>
<text x="691" y="707" font-size="11.8" fill="#505050" textLength="27.46" lengthAdjust="spacingAndGlyphs">9,551</text>
<text x="783.7" y="707" font-size="11.8" fill="#505050" textLength="33.57" lengthAdjust="spacingAndGlyphs">18,334</text>
<text x="875.8" y="707" font-size="11.8" fill="#505050" textLength="33.57" lengthAdjust="spacingAndGlyphs">19,327</text>
<text x="965.6" y="707" font-size="11.8" fill="#505050" textLength="33.57" lengthAdjust="spacingAndGlyphs">20,959</text>
<text x="1055.8" y="707" font-size="11.8" fill="#505050" textLength="33.57" lengthAdjust="spacingAndGlyphs">22,255</text>
<text x="1145.9" y="707" font-size="11.8" fill="#505050" textLength="33.57" lengthAdjust="spacingAndGlyphs">23,206</text>
<text x="1235.7" y="707" font-size="11.8" fill="#505050" textLength="33.57" lengthAdjust="spacingAndGlyphs">25,895</text>
<text x="1325.8" y="707" font-size="11.8" fill="#505050" textLength="33.57" lengthAdjust="spacingAndGlyphs">25,944</text>
<text x="1416.3" y="707" font-size="11.8" fill="#505050" textLength="33.57" lengthAdjust="spacingAndGlyphs">25,971</text>
<path d="M234.2 734.6 V742 M230.0 738.8 L234.2 743 L238.39999999999998 738.8" fill="none" stroke="#cc2a20" stroke-width="2" stroke-linejoin="miter"/>
<text x="244.5" y="744.1" font-size="11.8" fill="#80604f" textLength="20.6" lengthAdjust="spacingAndGlyphs">74%</text>
<path d="M326.6 734.6 V742 M322.40000000000003 738.8 L326.6 743 L330.8 738.8" fill="none" stroke="#cc2a20" stroke-width="2" stroke-linejoin="miter"/>
<text x="336.90000000000003" y="744.1" font-size="11.8" fill="#80604f" textLength="20.6" lengthAdjust="spacingAndGlyphs">96%</text>
<path d="M418.5 734.6 V742 M414.3 738.8 L418.5 743 L422.7 738.8" fill="none" stroke="#cc2a20" stroke-width="2" stroke-linejoin="miter"/>
<text x="428.8" y="744.1" font-size="11.8" fill="#80604f" textLength="20.6" lengthAdjust="spacingAndGlyphs">96%</text>
<path d="M511.5 734.6 V742 M507.3 738.8 L511.5 743 L515.7 738.8" fill="none" stroke="#cc2a20" stroke-width="2" stroke-linejoin="miter"/>
<text x="521.8" y="744.1" font-size="11.8" fill="#80604f" textLength="20.6" lengthAdjust="spacingAndGlyphs">97%</text>
<path d="M603.6 734.6 V742 M599.4 738.8 L603.6 743 L607.8000000000001 738.8" fill="none" stroke="#cc2a20" stroke-width="2" stroke-linejoin="miter"/>
<text x="613.9" y="744.1" font-size="11.8" fill="#80604f" textLength="20.6" lengthAdjust="spacingAndGlyphs">98%</text>
<path d="M696 734.6 V742 M691.8 738.8 L696 743 L700.2 738.8" fill="none" stroke="#cc2a20" stroke-width="2" stroke-linejoin="miter"/>
<text x="706.3" y="744.1" font-size="11.8" fill="#80604f" textLength="20.6" lengthAdjust="spacingAndGlyphs">99%</text>
<path d="M788.7 734.6 V742 M784.5 738.8 L788.7 743 L792.9000000000001 738.8" fill="none" stroke="#cc2a20" stroke-width="2" stroke-linejoin="miter"/>
<text x="799.0" y="744.1" font-size="11.8" fill="#80604f" textLength="20.6" lengthAdjust="spacingAndGlyphs">99%</text>
<rect x="92" y="759.2" width="1400.3" height="26" fill="#e9eaeb"/>
<rect x="101.2" y="767.9" width="37.6" height="12" fill="#6b6b6b" rx="2"/>
<text x="105.4" y="775.9" font-size="8.5" fill="#fff" font-weight="bold" textLength="29.5" lengthAdjust="spacingAndGlyphs">14 items</text>
<rect x="143.8" y="767.9" width="34.3" height="12" fill="#6b6b6b" rx="2"/>
<text x="147" y="775.9" font-size="8.5" fill="#fff" font-weight="bold" textLength="27" lengthAdjust="spacingAndGlyphs">1 pages</text>
<rect x="1442.5" y="759.6" width="49.5" height="25.4" fill="#ffffff"/>
<rect x="1441.5" y="759.6" width="1" height="25.4" fill="#dedede"/>
<path d="M1455.4 768.7 V774.2 M1452.8 771.8 L1455.4 774.6 L1458 771.8" fill="none" stroke="#1f5f9f" stroke-width="1.6"/>
<rect x="1450.8" y="775" width="9.2" height="2" fill="#1f5f9f"/>
<text x="1464.9" y="776.8" font-size="11" fill="#1f5f9f" textLength="18.3" lengthAdjust="spacingAndGlyphs">CSV</text>
<rect x="1492.3" y="568.6" width="14.1" height="216.6" fill="#f1f1f1"/>
<rect x="1494" y="581" width="11" height="188.8" fill="#c1c1c1"/>
<path d="M1496.6 577.4 L1502.4 577.4 L1499.5 574.2Z" fill="#444"/>
<path d="M1496.6 776 L1502.4 776 L1499.5 779.3Z" fill="#222"/>
<rect x="92.5" y="802.5" width="1413.5" height="80" fill="#ffffff" rx="3" stroke="#dfe1e3" stroke-width="1"/>
<path d="M93 841.5 V806 A3 3 0 0 1 96 803 H1502.5 A3 3 0 0 1 1505.5 806 V841.5Z" fill="#f4f4f4"/>
<rect x="92.5" y="841" width="1413.5" height="1" fill="#dfe1e3"/>
<text x="755.3" y="826.1" font-size="16" fill="#555" font-weight="bold" textLength="87.5" lengthAdjust="spacingAndGlyphs">Week Details</text>
<rect x="105.5" y="854.8" width="98" height="20" fill="#ffffff" rx="3" stroke="#dcdcdc" stroke-width="1"/>
<rect x="1546" y="85" width="15" height="776" fill="#f1f1f1"/>
<rect x="1548.2" y="100.5" width="10.6" height="434" fill="#c1c1c1"/>
<path d="M1549.8 96.5 L1557.2 96.5 L1553.5 92.5Z" fill="#333"/>
<path d="M1549.8 849.5 L1557.2 849.5 L1553.5 853.5Z" fill="#333"/>
<rect x="1561" y="85" width="39" height="776" fill="#d4d4d4"/>
<rect x="1561" y="85" width="39" height="47.5" fill="#c2c1c2"/>
<rect x="1561" y="132.5" width="39" height="1.5" fill="#dcdcdc"/>
<rect x="1561" y="134" width="39" height="43.5" fill="#c2c1c2"/>
<path d="M1570.2 100.6 A2 2 0 0 1 1572.2 98.6 L1586.5 98.6 L1590.7 102.8 L1590.7 117 A2 2 0 0 1 1588.7 119 L1572.2 119 A2 2 0 0 1 1570.2 117Z" fill="#3a3a3a"/>
<rect x="1573.5" y="101.2" width="12.5" height="5.2" fill="#c2c1c2"/>
<circle cx="1580.5" cy="112.2" r="3.3" fill="#c2c1c2"/>
<path d="M1571 148 L1590.7 148 L1583.2 156 L1583.2 167.4 L1578.6 164.2 L1578.6 156Z" fill="#3a3a3a"/>
<circle cx="1580.9" cy="206.8" r="12.5" fill="#1b8bca"/>
<text x="1580.9" y="211.10000000000002" font-size="12" fill="#ffffff" font-weight="bold" text-anchor="middle">L</text>
<circle cx="1580.9" cy="249.5" r="12.5" fill="#1b8bca"/>
<text x="1580.9" y="253.8" font-size="12" fill="#ffffff" font-weight="bold" text-anchor="middle">A</text>
<circle cx="1580.9" cy="291.6" r="12.5" fill="#1b8bca"/>
<text x="1580.9" y="295.90000000000003" font-size="12" fill="#ffffff" font-weight="bold" text-anchor="middle">C</text>
<circle cx="1580.9" cy="334.3" r="12.5" fill="#1b8bca"/>
<text x="1580.9" y="338.6" font-size="12" fill="#ffffff" font-weight="bold" text-anchor="middle">P</text>
<circle cx="1580.9" cy="377.3" r="12.5" fill="#1b8bca"/>
<text x="1580.9" y="381.6" font-size="12" fill="#ffffff" font-weight="bold" text-anchor="middle">O</text>
<circle cx="1580.9" cy="419.4" r="12.5" fill="#1b8bca"/>
<text x="1580.9" y="423.7" font-size="12" fill="#ffffff" font-weight="bold" text-anchor="middle">T</text>
<path d="M1571.8 794.2 L1583 794.2 L1588.8 800 L1588.8 816.8 L1571.8 816.8Z" fill="#3a3a3a"/>
<path d="M1583 794.2 L1583 800 L1588.8 800Z" fill="#d4d4d4"/>
<path d="M1584.4 795.5 L1584.4 798.6 L1587.5 798.6Z" fill="#3a3a3a"/>
<rect x="1575.5" y="803.7" width="10" height="1.6" fill="#e8e8e8"/>
<rect x="1575.5" y="807.3" width="10" height="1.6" fill="#e8e8e8"/>
<rect x="1575.5" y="810.9" width="10" height="1.6" fill="#e8e8e8"/>
<path d="M1584.3 833.6 L1574.6 842.5 L1584.3 851.4" fill="none" stroke="#3a3a3a" stroke-width="2.6"/>
<rect x="0" y="860" width="1600" height="1" fill="#3c3c3c"/>
</svg>
</body></html>
